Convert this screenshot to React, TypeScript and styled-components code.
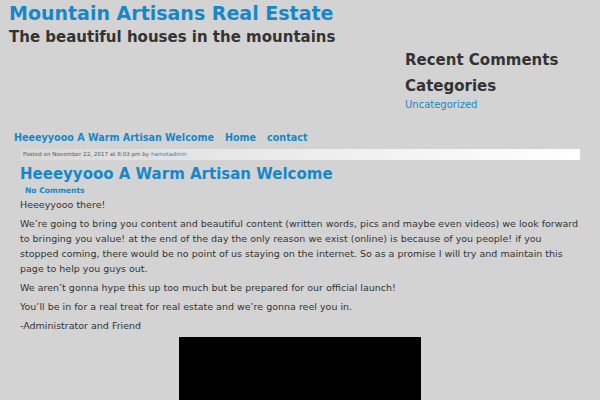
import React from "react";
import styled, { createGlobalStyle } from "styled-components";

const GlobalStyle = createGlobalStyle`
  html, body {
    margin: 0;
    padding: 0;
    background: #d3d3d3;
    font-family: "DejaVu Sans", Verdana, sans-serif;
    color: #333;
    overflow: hidden;
  }
`;

const Page = styled.div`
  width: 600px;
  height: 400px;
  overflow: hidden;
`;

const Top = styled.div`
  display: flex;
  justify-content: space-between;
`;

const Branding = styled.div`
  padding: 1px 0 0 9px;
`;

const SiteTitle = styled.h1`
  margin: 0;
  font-size: 19px;
  font-weight: bold;
  line-height: 24px;
  color: #1787c9;
`;

const Tagline = styled.h2`
  margin: 2px 0 0;
  font-size: 15px;
  font-weight: bold;
  line-height: 20px;
  color: #333;
`;

const Sidebar = styled.aside`
  width: 195px;
  padding-top: 50px;
`;

const WidgetTitle = styled.h3`
  margin: 0 0 6px;
  font-size: 15px;
  font-weight: bold;
  line-height: 20px;
  color: #333;
`;

const WidgetLink = styled.a`
  display: block;
  font-size: 10px;
  line-height: 14px;
  color: #1787c9;
  text-decoration: none;
  margin-top: -4px;
`;

const Nav = styled.nav`
  display: flex;
  gap: 11px;
  padding: 19px 0 0 14px;
`;

const NavLink = styled.a`
  font-size: 9.6px;
  font-weight: bold;
  line-height: 14px;
  color: #1787c9;
  text-decoration: none;
`;

const Post = styled.article`
  padding: 4px 20px 0 20px;
`;

const Meta = styled.div`
  height: 11px;
  padding-left: 3px;
  font-size: 5.6px;
  line-height: 11px;
  color: #555;
  background: linear-gradient(to right, #d9d9d9, #ffffff);

  a {
    color: #1787c9;
    text-decoration: none;
  }
`;

const PostTitle = styled.h2`
  margin: 4px 0 0;
  font-size: 15px;
  font-weight: bold;
  line-height: 20px;
  color: #1787c9;
`;

const CommentsLink = styled.a`
  display: block;
  padding-left: 5px;
  margin-top: 1px;
  font-size: 7.6px;
  font-weight: bold;
  line-height: 12px;
  color: #1787c9;
  text-decoration: none;
`;

const Body = styled.div`
  font-size: 9.5px;
  line-height: 15px;
  color: #333;

  p {
    margin: 0 0 4px;
  }
`;

const Video = styled.div`
  width: 242px;
  height: 80px;
  margin: 4px 0 0 159px;
  background: #000;
`;

export default function App() {
  return (
    <Page>
      <GlobalStyle />
      <Top>
        <Branding>
          <SiteTitle>Mountain Artisans Real Estate</SiteTitle>
          <Tagline>The beautiful houses in the mountains</Tagline>
        </Branding>
        <Sidebar>
          <WidgetTitle>Recent Comments</WidgetTitle>
          <WidgetTitle>Categories</WidgetTitle>
          <WidgetLink href="#">Uncategorized</WidgetLink>
        </Sidebar>
      </Top>
      <Nav>
        <NavLink href="#">Heeeyyooo A Warm Artisan Welcome</NavLink>
        <NavLink href="#">Home</NavLink>
        <NavLink href="#">contact</NavLink>
      </Nav>
      <Post>
        <Meta>
          Posted on November 22, 2017 at 8:03 pm by <a href="#">hametadmin</a>
        </Meta>
        <PostTitle>Heeeyyooo A Warm Artisan Welcome</PostTitle>
        <CommentsLink href="#">No Comments</CommentsLink>
        <Body>
          <p>Heeeyyooo there!</p>
          <p>
            We’re going to bring you content and beautiful content (written words, pics and maybe
            even videos) we look forward to bringing you value! at the end of the day the only
            reason we exist (online) is because of you people! if you stopped coming, there would
            be no point of us staying on the internet. So as a promise I will try and maintain this
            page to help you guys out.
          </p>
          <p>We aren’t gonna hype this up too much but be prepared for our official launch!</p>
          <p>You’ll be in for a real treat for real estate and we’re gonna reel you in.</p>
          <p>-Administrator and Friend</p>
          <Video />
        </Body>
      </Post>
    </Page>
  );
}
